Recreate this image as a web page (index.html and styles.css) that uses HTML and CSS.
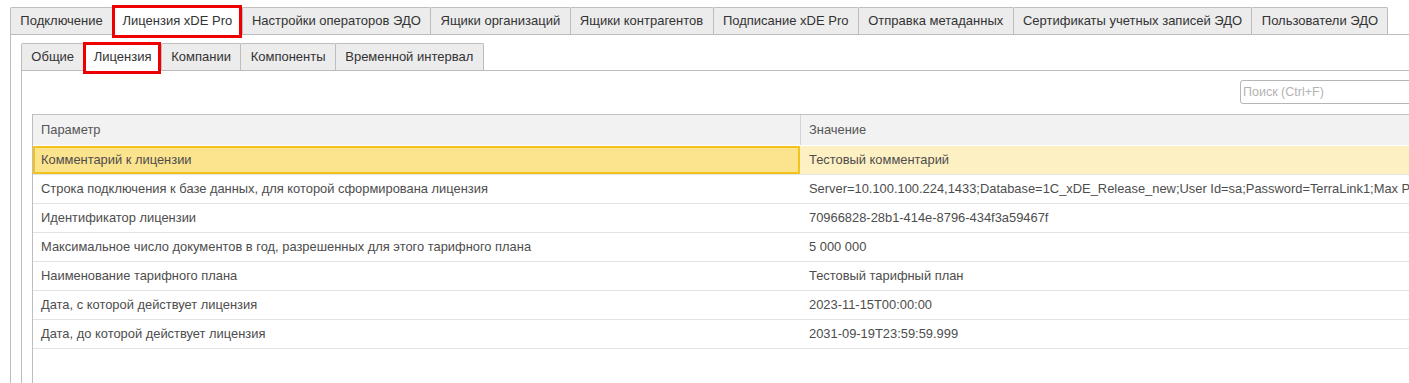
FILE: index.html
```html
<!DOCTYPE html>
<html>
<head>
  <title>Лицензия xDE Pro</title>
  <link rel="stylesheet" href="styles.css">
</head>
<body>
  <div class="page">
    <div class="tabs">
      <div class="tab">Подключение</div>
      <div class="tab active marked">Лицензия xDE Pro</div>
      <div class="tab">Настройки операторов ЭДО</div>
      <div class="tab">Ящики организаций</div>
      <div class="tab">Ящики контрагентов</div>
      <div class="tab">Подписание xDE Pro</div>
      <div class="tab">Отправка метаданных</div>
      <div class="tab">Сертификаты учетных записей ЭДО</div>
      <div class="tab">Пользователи ЭДО</div>
    </div>
    <div class="panel">
      <div class="tabs tabs-sub">
        <div class="tab">Общие</div>
        <div class="tab active marked">Лицензия</div>
        <div class="tab">Компании</div>
        <div class="tab">Компоненты</div>
        <div class="tab">Временной интервал</div>
      </div>
      <div class="panel panel-sub">
        <div class="search-row">
          <input class="search" type="text" placeholder="Поиск (Ctrl+F)">
        </div>
        <div class="grid">
          <div class="grid-head">
            <div class="cell">Параметр</div>
            <div class="cell">Значение</div>
          </div>
          <div class="grid-row selected">
            <div class="cell">Комментарий к лицензии</div>
            <div class="cell">Тестовый комментарий</div>
          </div>
          <div class="grid-row">
            <div class="cell">Строка подключения к базе данных, для которой сформирована лицензия</div>
            <div class="cell">Server=10.100.100.224,1433;Database=1C_xDE_Release_new;User Id=sa;Password=TerraLink1;Max P</div>
          </div>
          <div class="grid-row">
            <div class="cell">Идентификатор лицензии</div>
            <div class="cell">70966828-28b1-414e-8796-434f3a59467f</div>
          </div>
          <div class="grid-row">
            <div class="cell">Максимальное число документов в год, разрешенных для этого тарифного плана</div>
            <div class="cell">5 000 000</div>
          </div>
          <div class="grid-row">
            <div class="cell">Наименование тарифного плана</div>
            <div class="cell">Тестовый тарифный план</div>
          </div>
          <div class="grid-row">
            <div class="cell">Дата, с которой действует лицензия</div>
            <div class="cell">2023-11-15T00:00:00</div>
          </div>
          <div class="grid-row">
            <div class="cell">Дата, до которой действует лицензия</div>
            <div class="cell">2031-09-19T23:59:59.999</div>
          </div>
        </div>
      </div>
    </div>
  </div>
</body>
</html>
```

FILE: styles.css
```css
/* page */
body {
  margin: 0;
  font-family: Arial, "Liberation Sans", sans-serif;
  font-size: 13px;
  color: #333;
  background-color: #fff;
  overflow: hidden;
}

.page {
  width: 1430px;
  padding: 7px 0 0 10px;
}

/* tabs */
.tabs {
  display: flex;
  align-items: flex-start;
  border-bottom: 1px solid #bcbcbc;
}

.tab {
  position: relative;
  height: 26px;
  line-height: 26px;
  padding: 0 9.35px;
  margin-right: -1px;
  border: 1px solid #bdbdbd;
  border-bottom: none;
  border-radius: 2px 2px 0 0;
  background-color: #ececec;
  white-space: nowrap;
}

.tab.active {
  height: 27px;
  margin-bottom: -1px;
  background-color: #fff;
  z-index: 1;
}

.tab.marked::after {
  content: "";
  position: absolute;
  left: -1px;
  right: 0;
  top: -3px;
  bottom: -3px;
  border: 3px solid #ee0000;
  z-index: 2;
}

.tabs-sub .tab.marked::after {
  top: -2px;
  bottom: -3px;
}

/* panels */
.panel {
  border-left: 1px solid #bdbdbd;
  padding: 8px 0 0 10px;
  min-height: 400px;
}

.panel-sub {
  padding-top: 9px;
}

.search-row {
  display: flex;
  justify-content: flex-end;
  margin-bottom: 10px;
}

.search {
  width: 200px;
  height: 24px;
  box-sizing: border-box;
  padding: 0 2px;
  border: 1px solid #b5b5b5;
  border-radius: 3px;
  font-family: Arial, "Liberation Sans", sans-serif;
  font-size: 12.5px;
  outline: none;
}

.search::placeholder {
  color: #b3b3b3;
}

/* grid */
.grid {
  border-top: 1px solid #c2c2c2;
  border-left: 1px solid #bdbdbd;
  min-height: 300px;
  color: #4d4d4d;
  font-size: 12.9px;
}

.grid-head,
.grid-row {
  display: grid;
  grid-template-columns: 767px 1fr;
}

.cell {
  padding-left: 8px;
  white-space: nowrap;
  overflow: hidden;
}

.grid-head {
  height: 30px;
  line-height: 30px;
  background-color: #f2f2f2;
  border-bottom: 1px solid #fff;
  color: #555;
}

.grid-head .cell + .cell {
  border-left: 1px solid #d4d4d4;
}

.grid-row {
  height: 28px;
  line-height: 28px;
  border-bottom: 1px solid #e3e3e3;
}

.grid-row .cell + .cell {
  border-left: 1px solid transparent;
}

.grid-row.selected .cell:first-child {
  box-sizing: border-box;
  padding-left: 6px;
  line-height: 24px;
  border: 2px solid #f4c21c;
  background-color: #fce38d;
}

.grid-row.selected .cell + .cell {
  background-color: #fdf1c3;
}
```
